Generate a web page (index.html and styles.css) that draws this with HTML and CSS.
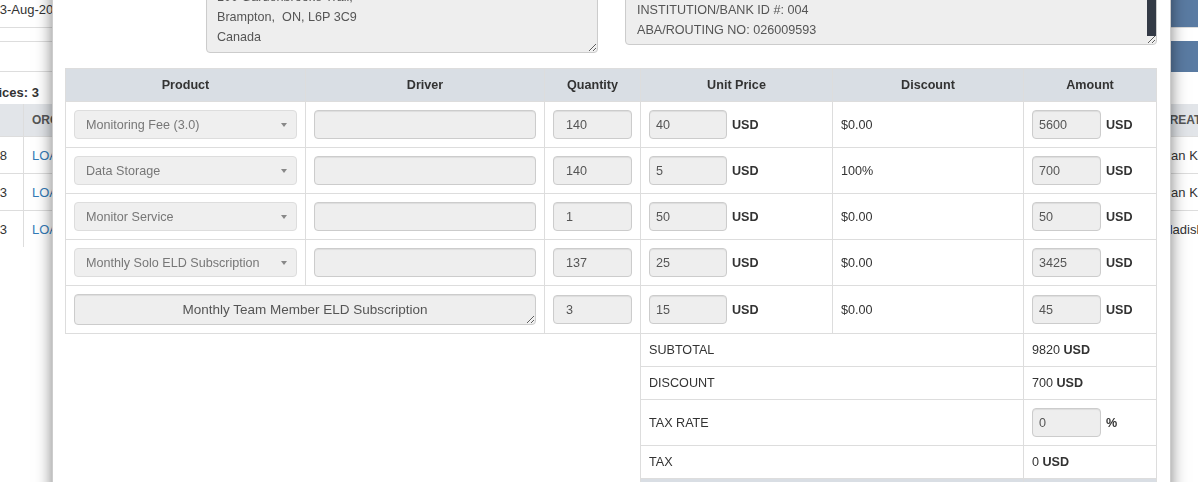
FILE: index.html
```html
<!DOCTYPE html>
<html lang="en">
<head>
<meta charset="UTF-8" />
<meta name="viewport" content="width=device-width, initial-scale=1" />
<title>Invoices</title>
<link rel="stylesheet" href="styles.css">
</head>
<body>

<!-- invoice list behind the dialog -->
<div class="page">
  <div class="filters">
    <span class="filter-date">From: 03-Aug-2023 &nbsp; To: 18-Aug-2023</span>
    <a class="btn-blue">Search</a>
  </div>
  <div class="toolbar">
    <a class="btn-blue">Export</a>
  </div>
  <div class="count">Total Invoices: 3</div>
  <div class="list">
    <div class="list-row list-head">
      <div class="cell num">#</div>
      <div class="cell">ORGANIZATION</div>
      <div class="cell">CREATED BY</div>
    </div>
    <div class="list-row">
      <div class="cell num">1048</div>
      <div class="cell"><a>LOADLINK TRANSPORT</a></div>
      <div class="cell">Ivan Kalinin</div>
    </div>
    <div class="list-row">
      <div class="cell num">1043</div>
      <div class="cell"><a>LOADLINK TRANSPORT</a></div>
      <div class="cell">Ivan Kalinin</div>
    </div>
    <div class="list-row">
      <div class="cell num">1033</div>
      <div class="cell"><a>LOADLINK TRANSPORT</a></div>
      <div class="cell">Vladislav Petrov</div>
    </div>
  </div>
</div>

<!-- invoice dialog -->
<div class="modal">
  <div class="modal-body">
    <div class="parties">
      <textarea class="address" readonly>Northline Logistics Inc.
100 Gardenbrooke Trail,
Brampton,  ON, L6P 3C9
Canada</textarea>
      <div class="bank">
        <textarea class="bank-info" readonly>PAY TO: TD CANADA TRUST
ACCOUNT NO: 5204671
INSTITUTION/BANK ID #: 004
ABA/ROUTING NO: 026009593</textarea>
        <span class="thumb"></span>
      </div>
    </div>

    <table class="items">
      <colgroup>
        <col style="width:240px"><col style="width:239px"><col style="width:96px">
        <col style="width:192px"><col style="width:191px"><col>
      </colgroup>
      <thead>
        <tr>
          <th>Product</th>
          <th>Driver</th>
          <th>Quantity</th>
          <th>Unit Price</th>
          <th>Discount</th>
          <th>Amount</th>
        </tr>
      </thead>
      <tbody>
        <tr>
          <td><div class="picker"><span>Monitoring Fee (3.0)</span><i class="caret"></i></div></td>
          <td><input class="field" type="text" readonly></td>
          <td><input class="field" type="text" value="140" readonly></td>
          <td><div class="money"><input class="field price" type="text" value="40" readonly><b>USD</b></div></td>
          <td class="disc">$0.00</td>
          <td><div class="money"><input class="field amount" type="text" value="5600" readonly><b>USD</b></div></td>
        </tr>
        <tr>
          <td><div class="picker"><span>Data Storage</span><i class="caret"></i></div></td>
          <td><input class="field" type="text" readonly></td>
          <td><input class="field" type="text" value="140" readonly></td>
          <td><div class="money"><input class="field price" type="text" value="5" readonly><b>USD</b></div></td>
          <td class="disc">100%</td>
          <td><div class="money"><input class="field amount" type="text" value="700" readonly><b>USD</b></div></td>
        </tr>
        <tr>
          <td><div class="picker"><span>Monitor Service</span><i class="caret"></i></div></td>
          <td><input class="field" type="text" readonly></td>
          <td><input class="field" type="text" value="1" readonly></td>
          <td><div class="money"><input class="field price" type="text" value="50" readonly><b>USD</b></div></td>
          <td class="disc">$0.00</td>
          <td><div class="money"><input class="field amount" type="text" value="50" readonly><b>USD</b></div></td>
        </tr>
        <tr>
          <td><div class="picker"><span>Monthly Solo ELD Subscription</span><i class="caret"></i></div></td>
          <td><input class="field" type="text" readonly></td>
          <td><input class="field" type="text" value="137" readonly></td>
          <td><div class="money"><input class="field price" type="text" value="25" readonly><b>USD</b></div></td>
          <td class="disc">$0.00</td>
          <td><div class="money"><input class="field amount" type="text" value="3425" readonly><b>USD</b></div></td>
        </tr>
        <tr>
          <td colspan="2"><textarea class="custom-item" readonly>Monthly Team Member ELD Subscription</textarea></td>
          <td><input class="field" type="text" value="3" readonly></td>
          <td><div class="money"><input class="field price" type="text" value="15" readonly><b>USD</b></div></td>
          <td class="disc">$0.00</td>
          <td><div class="money"><input class="field amount" type="text" value="45" readonly><b>USD</b></div></td>
        </tr>

        <tr class="sum">
          <td colspan="3" class="blank"></td>
          <td colspan="2">SUBTOTAL</td>
          <td>9820 <b>USD</b></td>
        </tr>
        <tr class="sum">
          <td colspan="3" class="blank"></td>
          <td colspan="2">DISCOUNT</td>
          <td>700 <b>USD</b></td>
        </tr>
        <tr class="sum">
          <td colspan="3" class="blank"></td>
          <td colspan="2">TAX RATE</td>
          <td><div class="money"><input class="field amount" type="text" value="0" readonly><b>%</b></div></td>
        </tr>
        <tr class="sum">
          <td colspan="3" class="blank"></td>
          <td colspan="2">TAX</td>
          <td>0 <b>USD</b></td>
        </tr>
        <tr class="sum total">
          <td colspan="3" class="blank"></td>
          <td colspan="2">TOTAL</td>
          <td>9120 <b>USD</b></td>
        </tr>
      </tbody>
    </table>
  </div>
</div>

</body>
</html>
```

FILE: styles.css
```css
body {
  margin: 0;
  overflow: hidden;
  background-color: #fff;
  font-family: "Liberation Sans", Arial, sans-serif;
  font-size: 12.6px;
  color: #333;
}

/* ---------- list page ---------- */

.page {
  width: 1340px;
  margin-left: -64px;
  font-size: 13px;
}

.filters {
  display: flex;
  justify-content: space-between;
  height: 27px;
  border-bottom: 1px solid #ddd;
}

.filter-date {
  padding-left: 19px;
  line-height: 20px;
}

.btn-blue {
  display: flex;
  align-items: center;
  justify-content: flex-end;
  box-sizing: border-box;
  width: 130px;
  padding-right: 12px;
  background-color: #5a7ba2;
  color: white;
}

.toolbar {
  display: flex;
  justify-content: flex-end;
  height: 29px;
  margin-top: 13px;
  border-top: 1px solid #ddd;
  border-bottom: 1px solid #ddd;
}

.toolbar .btn-blue {
  margin: -1px 0;
}

.count {
  padding: 13px 0 3px 2px;
  line-height: 16px;
  font-weight: bold;
}

.list-row {
  display: grid;
  grid-template-columns: 88px 1fr 123px;
  height: 36px;
  border-top: 1px solid #ddd;
}

.list-head {
  height: 32px;
  border-top: none;
  background-color: #e2e5e9;
  color: #555;
  font-size: 12px;
  font-weight: bold;
}

.cell {
  display: flex;
  align-items: center;
  padding: 0 8px;
  white-space: nowrap;
  overflow: hidden;
}

.cell.num {
  justify-content: flex-end;
  padding-right: 16px;
  border-right: 1px solid #ddd;
}

.list-head .cell.num {
  justify-content: flex-start;
}

.cell a {
  color: #337ab7;
}

/* ---------- dialog ---------- */

.modal {
  position: fixed;
  top: -59px;
  left: 52px;
  width: 1119px;
  min-height: 640px;
  box-sizing: border-box;
  background-color: #fff;
  border: 1px solid rgba(0, 0, 0, 0.2);
  box-shadow: 0 5px 15px rgba(0, 0, 0, 0.5);
}

.modal-body {
  padding: 13px 13px 13px 12px;
}

.parties {
  display: flex;
  align-items: flex-end;
  gap: 27px;
  padding-left: 141px;
}

textarea {
  display: block;
  box-sizing: border-box;
  margin: 0;
  background-color: #eee;
  border: 1px solid #ccc;
  border-radius: 4px;
  box-shadow: inset 0 1px 1px rgba(0, 0, 0, 0.075);
  font-family: inherit;
  color: #555;
  overflow: hidden;
}

.address {
  flex: none;
  width: 392px;
  height: 92px;
  padding: 5px 10px;
  font-size: 12.6px;
  line-height: 20px;
}

.bank {
  position: relative;
  flex: 1;
  margin-bottom: 8px;
}

.bank-info {
  width: 100%;
  height: 90px;
  padding: 4px 11px;
  font-size: 12.6px;
  line-height: 20px;
}

.thumb {
  position: absolute;
  right: 1px;
  bottom: 9px;
  width: 9px;
  height: 62px;
  background-color: #333a46;
}

.items {
  width: 100%;
  margin-top: 15px;
  border-collapse: collapse;
  table-layout: fixed;
}

.items th,
.items td {
  border: 1px solid #ddd;
  padding: 8px;
  line-height: 16px;
  vertical-align: middle;
}

.items th {
  background-color: #d9dee4;
  text-align: center;
  font-weight: bold;
}

.picker {
  display: flex;
  align-items: center;
  justify-content: space-between;
  box-sizing: border-box;
  height: 29px;
  padding: 0 9px 0 11px;
  background-color: #efefef;
  border: 1px solid #ddd;
  border-radius: 4px;
  color: #777;
  white-space: nowrap;
}

.caret {
  width: 0;
  height: 0;
  border-top: 4px solid #888;
  border-left: 3.5px solid transparent;
  border-right: 3.5px solid transparent;
}

.field {
  display: block;
  box-sizing: border-box;
  width: 100%;
  height: 29px;
  margin: 0;
  padding: 0 12px;
  background-color: #eee;
  border: 1px solid #ccc;
  border-radius: 4px;
  box-shadow: inset 0 1px 1px rgba(0, 0, 0, 0.075);
  font-family: inherit;
  font-size: 12.6px;
  color: #555;
  outline: none;
}

.money {
  display: flex;
  align-items: center;
  gap: 5px;
}

.field.price {
  width: 78px;
  padding: 0 6px;
}

.field.amount {
  width: 69px;
  padding: 0 6px;
}

.disc {
  padding-bottom: 10px;
}

.custom-item {
  width: 100%;
  height: 31px;
  padding: 5px 12px;
  font-size: 13.5px;
  line-height: 19px;
  text-align: center;
}

.sum td.blank {
  border: none;
}

.total td:not(.blank) {
  background-color: #d9dee4;
  font-weight: bold;
}
```
